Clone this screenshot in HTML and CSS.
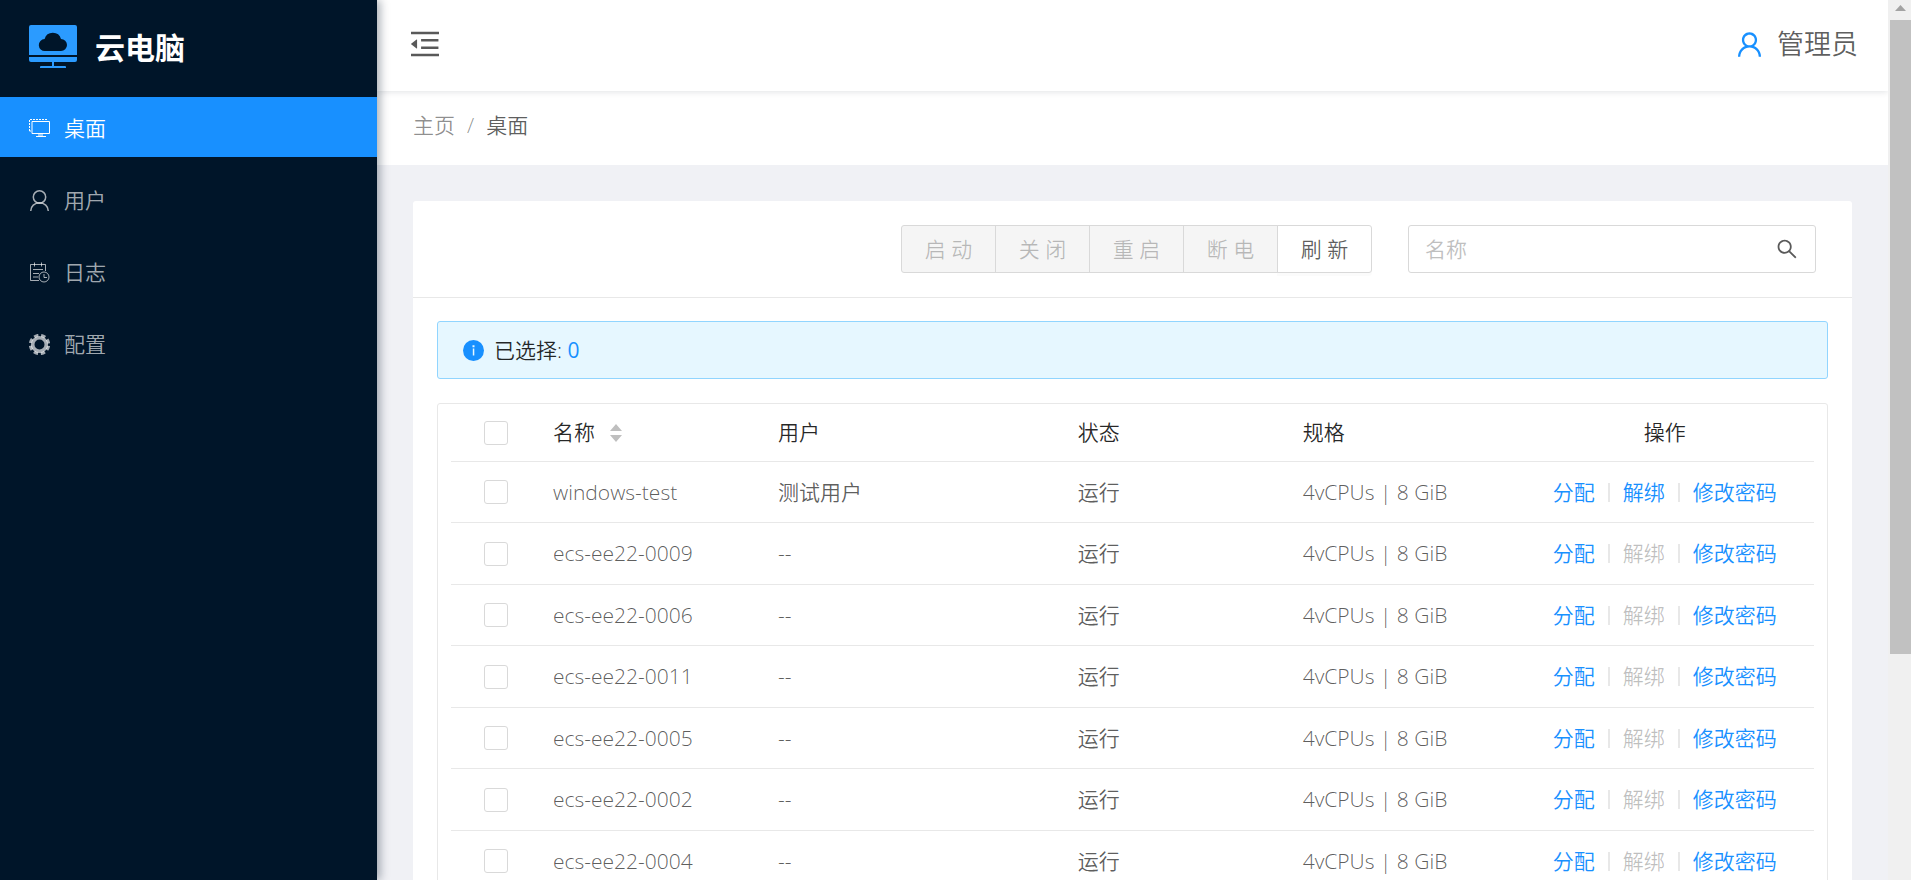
FILE: index.html
```html
<!DOCTYPE html>
<html lang="zh-CN">
<head>
<meta charset="utf-8">
<title>云电脑</title>
<link rel="stylesheet" href="styles.css">
</head>
<body>
<svg class="sprite" aria-hidden="true">
  <symbol id="user" viewBox="112 104 800 816"><path d="M858.5 763.6a374 374 0 0 0-80.6-119.5 375.63 375.63 0 0 0-119.5-80.6c-.4-.2-.8-.3-1.2-.5C719.5 518 760 444.7 760 362c0-137-111-248-248-248S264 225 264 362c0 82.7 40.5 156 102.8 201.1-.4.2-.8.3-1.2.5-44.8 18.9-85 46-119.5 80.6a375.63 375.63 0 0 0-80.6 119.5A371.7 371.7 0 0 0 136 901.8a8 8 0 0 0 8 8.2h60c4.4 0 7.9-3.5 8-7.8 2-77.2 33-149.5 87.8-204.3 56.7-56.7 132-87.9 212.2-87.9s155.5 31.2 212.2 87.9C779 752.7 810 825 812 902.2c.1 4.4 3.6 7.8 8 7.8h60a8 8 0 0 0 8-8.2c-1-47.8-10.9-94.3-29.5-138.2zM512 534c-45.9 0-89.1-17.9-121.6-50.4S340 407.9 340 362c0-45.9 17.9-89.1 50.4-121.6S466.1 190 512 190s89.1 17.9 121.6 50.4S684 316.1 684 362c0 45.9-17.9 89.1-50.4 121.6S557.9 534 512 534z"/></symbol>
</svg>
<div class="app">
  <aside class="sidebar">
    <div class="brand">
      <svg class="brand-logo" viewBox="0 0 48 44" aria-hidden="true">
        <path fill="#2b9bff" d="M2 0h44a2 2 0 0 1 2 2v28H0V2a2 2 0 0 1 2-2zM0 32h48v3a2 2 0 0 1-2 2H25v4h11a1 1 0 0 1 1 1v1H11v-1a1 1 0 0 1 1-1h11v-4H2a2 2 0 0 1-2-2z"/>
        <path fill="#001529" d="M16 26a6 6 0 0 1-.4-12A8.500 8.500 0 0 1 32 14a6 6 0 0 1 0 12z"/>
      </svg>
      <h1 class="brand-name">云电脑</h1>
    </div>
    <nav class="menu">
      <a class="menu-item active" href="#desktop">
        <svg class="menu-icon" viewBox="0 0 21 21" fill="none" stroke="currentColor" aria-hidden="true"><path d="M3 3.500h17.500v12H3z"/><path stroke-dasharray="2 1" d="M.5 13V1.500H19M.5 13H2"/><path d="M9 17h5M7 18.500h10"/></svg>
        <span>桌面</span></a>
      <a class="menu-item" href="#users">
        <svg class="menu-icon" viewBox="0 0 21 21" fill="none" stroke="currentColor" stroke-width="1.500" aria-hidden="true"><circle cx="10.500" cy="7" r="6.200"/><path d="M1.700 21a8.800 8.300 0 0 1 17.600 0"/></svg>
        <span>用户</span></a>
      <a class="menu-item" href="#logs">
        <svg class="menu-icon" viewBox="0 0 21 21" fill="none" stroke="currentColor" aria-hidden="true"><path d="M10 18.500H1.500V2.500h15V9M5.500.500v4M12.500.500v4M4 7.500h10M4 11.500h6M4 15h5"/><circle cx="15" cy="15" r="5"/><path d="M15 12v3.500h3"/></svg>
        <span>日志</span></a>
      <a class="menu-item" href="#config">
        <svg class="menu-icon" viewBox="0 0 21 21" fill="none" stroke="currentColor" aria-hidden="true"><circle cx="10.500" cy="10.500" r="6.800" stroke-width="3.600"/><circle cx="10.500" cy="10.500" r="9.200" stroke-width="3" stroke-dasharray="4.400 2.826" stroke-dashoffset="-1.400"/></svg>
        <span>配置</span></a>
    </nav>
  </aside>
  <div class="page">
    <header class="topbar">
      <button class="icon-button" type="button" aria-label="收起菜单">
        <svg class="fold-icon" viewBox="112 112 800 800" aria-hidden="true"><path d="M408 442h480c4.400 0 8-3.600 8-8v-56c0-4.400-3.600-8-8-8H408c-4.400 0-8 3.600-8 8v56c0 4.400 3.600 8 8 8zm-8 204c0 4.400 3.600 8 8 8h480c4.400 0 8-3.600 8-8v-56c0-4.400-3.600-8-8-8H408c-4.400 0-8 3.600-8 8v56zm504-486H120c-4.400 0-8 3.600-8 8v56c0 4.400 3.600 8 8 8h784c4.400 0 8-3.600 8-8v-56c0-4.400-3.600-8-8-8zm0 632H120c-4.400 0-8 3.600-8 8v56c0 4.400 3.600 8 8 8h784c4.400 0 8-3.600 8-8v-56c0-4.400-3.600-8-8-8zM115.400 518.900L271.700 642c5.800 4.600 14.400.500 14.400-6.900V388.900c0-7.400-8.500-11.500-14.400-6.900L115.400 505.100a8.740 8.740 0 0 0 0 13.800z"/></svg>
      </button>
      <button class="account" type="button"><svg class="account-icon" aria-hidden="true"><use href="#user"/></svg><span>管理员</span></button>
    </header>
    <nav class="breadcrumb" aria-label="面包屑"><a href="#home">主页</a><span class="slash">/</span><span class="current">桌面</span></nav>
    <main class="content">
      <section class="card">
        <div class="toolbar">
          <div class="button-group">
            <button class="button" type="button" disabled>启 动</button>
            <button class="button" type="button" disabled>关 闭</button>
            <button class="button" type="button" disabled>重 启</button>
            <button class="button" type="button" disabled>断 电</button>
            <button class="button" type="button">刷 新</button>
          </div>
          <div class="search">
            <input class="search-input" type="text" placeholder="名称" aria-label="名称">
            <button class="icon-button" type="button" aria-label="搜索">
              <svg class="search-icon" viewBox="0 0 1024 1024" aria-hidden="true"><path d="M909.600 854.500L649.900 594.800C690.200 542.700 712 479 712 412c0-80.200-31.300-155.400-87.900-212.100-56.600-56.700-132-87.900-212.100-87.900s-155.500 31.300-212.100 87.900C143.200 256.500 112 331.800 112 412c0 80.100 31.300 155.500 87.900 212.100C256.500 680.800 331.800 712 412 712c67 0 130.600-21.800 182.700-62l259.700 259.600a8.200 8.200 0 0 0 11.600 0l43.600-43.500a8.200 8.200 0 0 0 0-11.600zM570.400 570.400C528 612.700 471.800 636 412 636s-116-23.300-158.400-65.600C211.300 528 188 471.800 188 412s23.300-116.100 65.600-158.400C296 211.300 352.200 188 412 188s116.100 23.200 158.400 65.600S636 352.200 636 412s-23.300 116.100-65.600 158.400z"/></svg>
            </button>
          </div>
        </div>
        <div class="card-body">
          <div class="alert">
            <svg class="alert-icon" viewBox="0 0 21 21" aria-hidden="true"><circle cx="10.500" cy="10.500" r="10.500" fill="#1890ff"/><path fill="#e6f7ff" d="M9.800 8.500h1.500v7H9.800zM9.500 5.200h2v2h-2z"/></svg>
            <p class="alert-text">已选择: <b class="count">0</b></p>
          </div>
          <div class="table-frame">
            <table class="table">
              <colgroup><col class="col-pick"><col class="col-narrow"><col class="col-wide"><col class="col-narrow"><col class="col-narrow"><col></colgroup>
              <thead>
                <tr><th class="pick"><input class="checkbox" type="checkbox" aria-label="全选"></th>
                  <th><span class="sortable">名称<svg class="sort-icon" viewBox="0 0 12 18" aria-hidden="true"><path d="M6 0l6 7H0zM0 11h12l-6 7z"/></svg></span></th>
                  <th>用户</th><th>状态</th><th>规格</th><th class="ops-head">操作</th></tr>
              </thead>
              <tbody>
                <tr><td class="pick"><input class="checkbox" type="checkbox" aria-label="windows-test"></td><td>windows-test</td><td>测试用户</td><td>运行</td><td>4vCPUs | 8 GiB</td><td><div class="ops"><a href="#assign">分配</a><i class="rule"></i><a href="#unbind">解绑</a><i class="rule"></i><a href="#password">修改密码</a></div></td></tr>
                <tr><td class="pick"><input class="checkbox" type="checkbox" aria-label="ecs-ee22-0009"></td><td>ecs-ee22-0009</td><td>--</td><td>运行</td><td>4vCPUs | 8 GiB</td><td><div class="ops"><a href="#assign">分配</a><i class="rule"></i><a class="off">解绑</a><i class="rule"></i><a href="#password">修改密码</a></div></td></tr>
                <tr><td class="pick"><input class="checkbox" type="checkbox" aria-label="ecs-ee22-0006"></td><td>ecs-ee22-0006</td><td>--</td><td>运行</td><td>4vCPUs | 8 GiB</td><td><div class="ops"><a href="#assign">分配</a><i class="rule"></i><a class="off">解绑</a><i class="rule"></i><a href="#password">修改密码</a></div></td></tr>
                <tr><td class="pick"><input class="checkbox" type="checkbox" aria-label="ecs-ee22-0011"></td><td>ecs-ee22-0011</td><td>--</td><td>运行</td><td>4vCPUs | 8 GiB</td><td><div class="ops"><a href="#assign">分配</a><i class="rule"></i><a class="off">解绑</a><i class="rule"></i><a href="#password">修改密码</a></div></td></tr>
                <tr><td class="pick"><input class="checkbox" type="checkbox" aria-label="ecs-ee22-0005"></td><td>ecs-ee22-0005</td><td>--</td><td>运行</td><td>4vCPUs | 8 GiB</td><td><div class="ops"><a href="#assign">分配</a><i class="rule"></i><a class="off">解绑</a><i class="rule"></i><a href="#password">修改密码</a></div></td></tr>
                <tr><td class="pick"><input class="checkbox" type="checkbox" aria-label="ecs-ee22-0002"></td><td>ecs-ee22-0002</td><td>--</td><td>运行</td><td>4vCPUs | 8 GiB</td><td><div class="ops"><a href="#assign">分配</a><i class="rule"></i><a class="off">解绑</a><i class="rule"></i><a href="#password">修改密码</a></div></td></tr>
                <tr><td class="pick"><input class="checkbox" type="checkbox" aria-label="ecs-ee22-0004"></td><td>ecs-ee22-0004</td><td>--</td><td>运行</td><td>4vCPUs | 8 GiB</td><td><div class="ops"><a href="#assign">分配</a><i class="rule"></i><a class="off">解绑</a><i class="rule"></i><a href="#password">修改密码</a></div></td></tr>
              </tbody>
            </table>
          </div>
        </div>
      </section>
    </main>
  </div>
  <div class="scrollbar" aria-hidden="true">
    <svg class="scroll-arrow" viewBox="0 0 21 20"><path fill="#a3a3a3" d="M5 11l5.500-6 5.500 6z"/></svg>
    <div class="scroll-thumb"></div>
  </div>
</div>
</body>
</html>
```
FILE: styles.css
```css
*, *::before, *::after { box-sizing: border-box; }

body {
  margin: 0;
  background: #f0f2f5;
  color: rgba(0, 0, 0, .65);
  font: 350 21px/31px "Open Sans", "Noto Sans CJK SC", sans-serif;
}

a { color: inherit; text-decoration: none; }
button, input { font: inherit; color: inherit; }
svg { display: block; fill: currentColor; flex: none; }
svg[fill="none"] { fill: none; }

.sprite { position: absolute; width: 0; height: 0; }

.app {
  display: grid;
  grid-template-columns: 377px minmax(0, 1fr) 23px;
  height: 100vh;
  overflow: hidden;
}

.sidebar {
  position: relative;
  z-index: 2;
  background: #001529;
  color: #fff;
  box-shadow: 3px 0 9px rgba(0, 21, 41, .35);
}
.brand { display: flex; align-items: center; gap: 18px; height: 97px; padding: 0 29px 3px; }
.brand-logo { width: 48px; height: 44px; }
.brand-name { margin: 0; font-size: 30px; font-weight: 700; line-height: 45px; }

.menu { display: grid; gap: 12px; }
.menu-item { display: flex; align-items: center; gap: 14px; height: 60px; padding: 2px 29px 0; color: rgba(255, 255, 255, .65); }
.menu-item.active { background: #1890ff; color: #fff; }
.menu-icon { width: 21px; height: 21px; }

.page { min-width: 0; overflow: hidden; background: #f0f1f5; }

.icon-button { padding: 0; border: 0; background: none; cursor: pointer; }

.topbar {
  position: relative;
  z-index: 1;
  display: flex;
  align-items: center;
  justify-content: space-between;
  height: 91px;
  padding: 0 30px 3px 34px;
  background: #fff;
  box-shadow: 0 1px 6px rgba(0, 21, 41, .12);
}
.fold-icon { width: 28px; height: 28px; }
.account { display: flex; align-items: center; gap: 15px; padding: 0; border: 0; background: none; font-size: 27px; line-height: 40px; }
.account-icon { width: 25px; height: 25px; color: #1890ff; }

.breadcrumb { display: flex; gap: 12px; align-items: center; height: 74px; padding: 0 36px 6px; background: #fff; color: rgba(0, 0, 0, .45); }
.current { color: rgba(0, 0, 0, .65); }

.content { padding: 36px; }
.card { background: #fff; border-radius: 3px; }
.toolbar { display: flex; justify-content: flex-end; align-items: center; gap: 36px; padding: 24px 36px 24px 24px; border-bottom: 1px solid #e8e8e8; }

.button-group { display: flex; }
.button { width: 95px; height: 48px; padding: 0; border: 1px solid #d9d9d9; background: #fff; box-shadow: 0 3px 0 rgba(0, 0, 0, .016); }
.button + .button { margin-left: -1px; }
.button:first-child { border-radius: 3px 0 0 3px; }
.button:last-child { border-radius: 0 3px 3px 0; }
.button:disabled { background: #f5f5f5; color: rgba(0, 0, 0, .25); box-shadow: none; }

.search { display: flex; align-items: center; width: 408px; height: 48px; padding: 0 16px; border: 1px solid #d9d9d9; border-radius: 3px; }
.search-input { flex: 1; min-width: 0; padding: 0; border: 0; outline: 0; background: none; }
.search-input::placeholder { color: #bfbfbf; opacity: 1; }
.search-icon { width: 24px; height: 24px; }

.card-body { padding: 23px 24px 36px; }
.alert { display: flex; align-items: center; gap: 10px; height: 58px; padding: 0 25px; border: 1px solid #91d5ff; border-radius: 3px; background: #e6f7ff; color: rgba(0, 0, 0, .85); }
.alert-icon { width: 21px; height: 21px; }
.alert-text { margin: 0; }
.count { color: #1890ff; font-weight: 500; }

.table-frame { margin-top: 24px; padding: 0 13px; border: 1px solid #e8e8e8; border-radius: 3px; }
.table { width: 100%; table-layout: fixed; border-collapse: separate; border-spacing: 0; }
.col-pick { width: 90px; }
.col-narrow { width: 16.5%; }
.col-wide { width: 22%; }
.table th, .table td { padding: 0 12px; border-bottom: 1px solid #e8e8e8; text-align: left; font-weight: inherit; white-space: nowrap; }
.table th { height: 58px; color: rgba(0, 0, 0, .85); }
.table td { height: 61px; }
.table tr:nth-child(even) td { height: 62px; }
.table .pick, .table .ops-head { text-align: center; }
.checkbox { appearance: none; display: block; width: 24px; height: 24px; margin: 0 auto; border: 1px solid #d9d9d9; border-radius: 3px; background: #fff; }
.checkbox:checked { background: #1890ff; border-color: #1890ff; }
.sortable { display: flex; align-items: center; gap: 15px; }
.sort-icon { width: 12px; height: 18px; color: #bfbfbf; }
.ops { display: flex; align-items: center; justify-content: center; gap: 13px; color: #1890ff; }
.rule { width: 2px; height: 19px; background: #e8e8e8; }
.off { color: rgba(0, 0, 0, .25); cursor: not-allowed; }

.scrollbar { z-index: 1; padding-left: 2px; background: #f0f0f0; }
.scroll-arrow { width: 21px; height: 20px; }
.scroll-thumb { height: 72%; background: #c1c1c1; }
```
